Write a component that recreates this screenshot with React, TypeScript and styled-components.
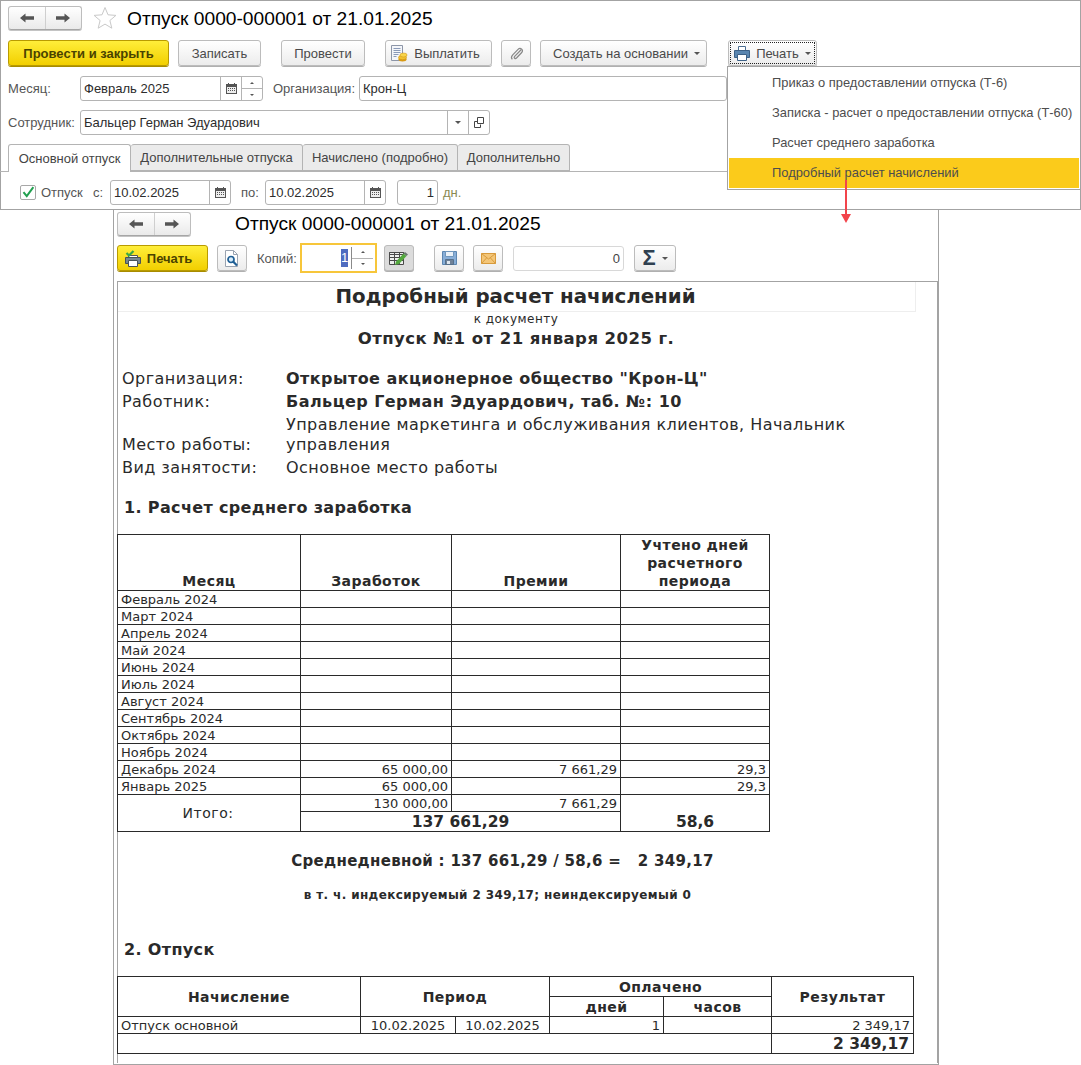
import React from 'react';
import styled, { createGlobalStyle } from 'styled-components';

const GlobalStyle = createGlobalStyle`
    html, body {
        margin: 0;
        padding: 0;
        background: #fff;
    }
    body {
        font-family: "Liberation Sans", Arial, sans-serif;
        font-size: 12px;
        color: #333;
    }
`;

const ArrowIcon = ({ right }: { right?: boolean }) => (
    <svg width="14" height="10" viewBox="0 0 14 10" style={right ? { transform: 'scaleX(-1)' } : undefined}>
        <path d="M5.500.5 0 5l5.500 4.500V6.700H14V3.300H5.500z" fill="#555" />
    </svg>
);

const StarIcon = () => (
    <svg width="24" height="24" viewBox="0 0 24 24">
        <path
            d="M12 1.500l3 7.300 7.900.6-6 5.100 1.900 7.700L12 18.100l-6.800 4.100 1.900-7.700-6-5.100 7.900-.6z"
            fill="#fff"
            stroke="#c9c9c9"
            strokeWidth="1"
        />
    </svg>
);

const CalendarIcon = () => (
    <svg width="11" height="11" viewBox="0 0 11 11">
        <path d="M0 1h11v10H0z" fill="#555" />
        <path d="M1 4h9v6H1z" fill="#eee" />
        <path d="M2 5h1v1H2zM4 5h1v1H4zM6 5h1v1H6zM8 5h1v1H8zM2 7h1v1H2zM4 7h1v1H4zM6 7h1v1H6zM8 7h1v1H8z" fill="#555" />
        <path d="M2 0h1v2H2zM8 0h1v2H8z" fill="#555" />
    </svg>
);

const PayIcon = () => (
    <svg width="17" height="17" viewBox="0 0 17 17">
        <path d="M.5.5h11v15H.5z" fill="#f4f6fa" stroke="#8d96a8" />
        <path d="M2.500 3.500h7M2.500 5.500h7M2.500 7.500h7M2.500 9.500h5M2.500 11.500h3" stroke="#8a9ab8" />
        <ellipse cx="11.500" cy="14.300" rx="4" ry="2.200" fill="#d99a14" />
        <ellipse cx="11.500" cy="12.500" rx="4" ry="2.200" fill="#f2c230" stroke="#c98c10" strokeWidth=".5" />
        <ellipse cx="12.500" cy="10" rx="3.600" ry="2" fill="#f8d44a" stroke="#c98c10" strokeWidth=".5" />
    </svg>
);

const ClipIcon = () => (
    <svg width="15" height="15" viewBox="0 0 18 18" fill="none">
        <path
            d="M14.500 4.500 6.800 12.400c-.9.900-.6 1.700-.1 2.200.6.500 1.400.7 2.300-.2l6-6.300c1.500-1.600 1.200-3.300.2-4.300-1.100-1-2.800-1.300-4.300.2L4.500 10.600c-2 2.200-1.600 4.300-.4 5.400"
            stroke="#888"
            strokeWidth="1.500"
        />
    </svg>
);

const OpenIcon = () => (
    <svg width="11" height="11" viewBox="0 0 11 11" fill="none">
        <path d="M3.500.5h6v6h-6z" stroke="#444" />
        <path d="M3.500 4.500H.5v6h6V7.500" stroke="#444" />
    </svg>
);

const PrinterIcon = () => (
    <svg width="16" height="15" viewBox="0 0 16 15">
        <path d="M4.500.5h7v5h-7z" fill="#fff" stroke="#4c6f92" />
        <path d="M.5 4.500h15v7H.5z" fill="#5a86b0" stroke="#3d6186" />
        <path d="M3.500 8.500h9v6h-9z" fill="#fff" stroke="#3d6186" />
    </svg>
);

const PrintCheckIcon = () => (
    <svg width="16" height="17" viewBox="0 0 16 17">
        <path d="M3.500 5.500h9v4h-9z" fill="#fff" stroke="#555" />
        <path d="M.5 7.500h15v6H.5z" fill="#76878f" stroke="#4a5358" />
        <path d="M3.500 10.500h9v6h-9z" fill="#fff" stroke="#4a5358" />
        <path d="M1.500 3l2.500 2.500L8.500 1" fill="none" stroke="#39a845" strokeWidth="2.200" />
    </svg>
);

const PreviewIcon = () => (
    <svg width="14" height="17" viewBox="0 0 14 17">
        <path d="M.5.5h8l4 4v12H.5z" fill="#fff" stroke="#9aa3b0" />
        <path d="M8.500.5v4h4" fill="none" stroke="#9aa3b0" />
        <circle cx="6" cy="9.500" r="3" fill="#d8ecfa" stroke="#1f5f95" strokeWidth="1.700" />
        <path d="M8.300 11.800 12 15.500" stroke="#1f5f95" strokeWidth="2.200" />
    </svg>
);

const TableEditIcon = () => (
    <svg width="20" height="15" viewBox="0 0 20 15">
        <path d="M.5 1.500h14v12H.5z" fill="#eef0ee" stroke="#4a4a4a" />
        <path d="M.5 1.500h14v2H.5zM.5 6.500h14M.5 9.500h14M5.500 1.500v12M10.500 1.500v12" fill="none" stroke="#4a4a4a" />
        <path d="M6 14l1-3.500 7.500-8 3 2.500-7.500 8z" fill="#53a83e" />
        <path d="M14.500 2.500 16 1l3 2.500L17.500 5z" fill="#6a7a70" />
    </svg>
);

const SaveIcon = () => (
    <svg width="15" height="14" viewBox="0 0 15 14">
        <path d="M.5.5h14v13H.5z" fill="#88aed8" stroke="#5c86b0" />
        <path d="M3.500.5h8v5h-8z" fill="#eaf1f8" stroke="#6f96bc" />
        <path d="M3.500 8.500h8v5h-8z" fill="#6f8298" stroke="#56708a" />
        <path d="M5 10h3v3H5z" fill="#dfe7ef" />
    </svg>
);

const MailIcon = () => (
    <svg width="15" height="11" viewBox="0 0 15 11">
        <path d="M.5.5h14v10H.5z" fill="#f4c678" stroke="#d79a3c" />
        <path d="M.5.5 7.500 6l7-5.500M.5 10.500l5-5.500M14.500 10.500l-5-5.500" fill="none" stroke="#d79a3c" />
    </svg>
);

const months: [string, string, string, string][] = [
    ['Февраль 2024', '', '', ''],
    ['Март 2024', '', '', ''],
    ['Апрель 2024', '', '', ''],
    ['Май 2024', '', '', ''],
    ['Июнь 2024', '', '', ''],
    ['Июль 2024', '', '', ''],
    ['Август 2024', '', '', ''],
    ['Сентябрь 2024', '', '', ''],
    ['Октябрь 2024', '', '', ''],
    ['Ноябрь 2024', '', '', ''],
    ['Декабрь 2024', '65 000,00', '7 661,29', '29,3'],
    ['Январь 2025', '65 000,00', '', '29,3'],
];

const menuItems = [
    'Приказ о предоставлении отпуска (Т-6)',
    'Записка - расчет о предоставлении отпуска (Т-60)',
    'Расчет среднего заработка',
    'Подробный расчет начислений',
];

export default function App(): React.ReactElement {
    return (
        <Page>
            <GlobalStyle />
            <DocWindow>
                <TitleRow>
                    <NavGroup>
                        <NavButton><ArrowIcon /></NavButton>
                        <NavButton><ArrowIcon right /></NavButton>
                    </NavGroup>
                    <StarSlot><StarIcon /></StarSlot>
                    <Title>Отпуск 0000-000001 от 21.01.2025</Title>
                </TitleRow>

                <CommandBar>
                    <Button $w={161} $primary>Провести и закрыть</Button>
                    <Button $w={83} $ml={9}>Записать</Button>
                    <Button $w={84} $ml={20}>Провести</Button>
                    <Button $w={107} $ml={20} $pr={6}><PayIcon />Выплатить</Button>
                    <Button $w={30} $ml={9}><ClipIcon /></Button>
                    <Button $w={167} $ml={9} $pl={6}>Создать на основании<Caret /></Button>
                    <Button $w={89} $ml={21} $focused><PrinterIcon />Печать<Caret /></Button>
                </CommandBar>

                <FormRow $mt={10}>
                    <FieldLabel $w={72}>Месяц:</FieldLabel>
                    <Field $w={183}>
                        <FieldText>Февраль 2025</FieldText>
                        <FieldAction><CalendarIcon /></FieldAction>
                        <Spinner><SpinUp /><SpinDown /></Spinner>
                    </Field>
                    <FieldLabel $w={86} $ml={10}>Организация:</FieldLabel>
                    <Field $w={368}><FieldText>Крон-Ц</FieldText></Field>
                </FormRow>

                <FormRow $mt={9}>
                    <FieldLabel $w={72}>Сотрудник:</FieldLabel>
                    <Field $w={410}>
                        <FieldText>Бальцер Герман Эдуардович</FieldText>
                        <FieldAction><Caret /></FieldAction>
                        <FieldAction><OpenIcon /></FieldAction>
                    </Field>
                </FormRow>

                <TabStrip>
                    <Tab $active $w={123}>Основной отпуск</Tab>
                    <Tab $w={172}>Дополнительные отпуска</Tab>
                    <Tab $w={155}>Начислено (подробно)</Tab>
                    <Tab $w={112}>Дополнительно</Tab>
                </TabStrip>

                <FormRow $mt={8}>
                    <CheckBox>
                        <svg width="17" height="15" viewBox="0 0 17 15" fill="none">
                            <path d="M3 7l4 5 8-11" stroke="#22a050" strokeWidth="2.400" />
                        </svg>
                    </CheckBox>
                    <FieldLabel $w={52} $ml={5}>Отпуск</FieldLabel>
                    <FieldLabel $w={17}>с:</FieldLabel>
                    <Field $w={121}>
                        <FieldText>10.02.2025</FieldText>
                        <FieldAction><CalendarIcon /></FieldAction>
                    </Field>
                    <FieldLabel $w={24} $ml={10}>по:</FieldLabel>
                    <Field $w={121}>
                        <FieldText>10.02.2025</FieldText>
                        <FieldAction><CalendarIcon /></FieldAction>
                    </Field>
                    <Field $w={41} $ml={11}><FieldText $right>1</FieldText></Field>
                    <FieldLabel $w={30} $ml={5} $muted>дн.</FieldLabel>
                </FormRow>

                <Menu>
                    {menuItems.map((item, i) => (
                        <MenuItem key={item} $active={i === 3}>{item}</MenuItem>
                    ))}
                </Menu>
            </DocWindow>

            <PointerArrow width="12" height="44" viewBox="0 0 12 44">
                <path d="M5 0h2v34h4l-5 9-5-9h4z" fill="#f2444b" />
            </PointerArrow>

            <PrintWindow>
                <PrintTitleRow>
                    <NavGroup>
                        <NavButton><ArrowIcon /></NavButton>
                        <NavButton><ArrowIcon right /></NavButton>
                    </NavGroup>
                    <PrintTitle>Отпуск 0000-000001 от 21.01.2025</PrintTitle>
                </PrintTitleRow>

                <PrintBar>
                    <Button $w={91} $primary $pr={8}><PrintCheckIcon />Печать</Button>
                    <Button $w={30} $ml={9}><PreviewIcon /></Button>
                    <FieldLabel $w={43} $ml={10}>Копий:</FieldLabel>
                    <CopiesField>
                        <Selected><SelectedDigit>1</SelectedDigit></Selected>
                        <CopiesSpinner><SpinUp /><SpinDown /></CopiesSpinner>
                    </CopiesField>
                    <Button $w={30} $ml={7} $pressed><TableEditIcon /></Button>
                    <Button $w={30} $ml={20}><SaveIcon /></Button>
                    <Button $w={30} $ml={9}><MailIcon /></Button>
                    <SumField>0</SumField>
                    <Button $w={42} $ml={10}><Sigma>Σ</Sigma><Caret /></Button>
                </PrintBar>

                <Sheet>
                    <SheetTitle>Подробный расчет начислений</SheetTitle>
                    <SheetCaption>к документу</SheetCaption>
                    <SheetSubtitle>Отпуск №1 от 21 января 2025 г.</SheetSubtitle>

                    <Info>
                        <InfoLabel>Организация:</InfoLabel>
                        <InfoValue $bold>Открытое акционерное общество "Крон-Ц"</InfoValue>
                        <InfoLabel>Работник:</InfoLabel>
                        <InfoValue $bold>Бальцер Герман Эдуардович, таб. №: 10</InfoValue>
                        <InfoLabel>Место работы:</InfoLabel>
                        <InfoValue>Управление маркетинга и обслуживания клиентов, Начальник управления</InfoValue>
                        <InfoLabel>Вид занятости:</InfoLabel>
                        <InfoValue>Основное место работы</InfoValue>
                    </Info>

                    <SectionTitle $mt={18}>1. Расчет среднего заработка</SectionTitle>

                    <EarningsTable>
                        <colgroup>
                            <col width="183" />
                            <col width="151" />
                            <col width="169" />
                            <col width="149" />
                        </colgroup>
                        <tbody>
                            <tr>
                                <HeadCell $h={56} $bottom>Месяц</HeadCell>
                                <HeadCell $h={56} $bottom>Заработок</HeadCell>
                                <HeadCell $h={56} $bottom>Премии</HeadCell>
                                <HeadCell $h={56} $bottom>Учтено дней<br />расчетного<br />периода</HeadCell>
                            </tr>
                            {months.map(row => (
                                <tr key={row[0]}>
                                    <Cell>{row[0]}</Cell>
                                    <Cell $right>{row[1]}</Cell>
                                    <Cell $right>{row[2]}</Cell>
                                    <Cell $right>{row[3]}</Cell>
                                </tr>
                            ))}
                            <tr>
                                <TotalLabel rowSpan={2}>Итого:</TotalLabel>
                                <Cell $right>130 000,00</Cell>
                                <Cell $right>7 661,29</Cell>
                                <TotalCell rowSpan={2} $bottom>58,6</TotalCell>
                            </tr>
                            <tr>
                                <TotalCell colSpan={2}>137 661,29</TotalCell>
                            </tr>
                        </tbody>
                    </EarningsTable>

                    <Average>Среднедневной : 137 661,29 / 58,6 = &nbsp; 2 349,17</Average>
                    <AverageNote>в т. ч. индексируемый 2 349,17; неиндексируемый 0</AverageNote>

                    <SectionTitle $mt={35}>2. Отпуск</SectionTitle>

                    <AccrualTable>
                        <colgroup>
                            <col width="243" />
                            <col width="95" />
                            <col width="94" />
                            <col width="114" />
                            <col width="108" />
                            <col width="142" />
                        </colgroup>
                        <tbody>
                            <tr>
                                <HeadCell $h={20} rowSpan={2}>Начисление</HeadCell>
                                <HeadCell $h={20} rowSpan={2} colSpan={2}>Период</HeadCell>
                                <HeadCell $h={20} colSpan={2}>Оплачено</HeadCell>
                                <HeadCell $h={20} rowSpan={2}>Результат</HeadCell>
                            </tr>
                            <tr>
                                <HeadCell $h={20}>дней</HeadCell>
                                <HeadCell $h={20}>часов</HeadCell>
                            </tr>
                            <tr>
                                <Cell>Отпуск основной</Cell>
                                <Cell $center>10.02.2025</Cell>
                                <Cell $center>10.02.2025</Cell>
                                <Cell $right>1</Cell>
                                <Cell />
                                <Cell $right>2 349,17</Cell>
                            </tr>
                            <tr>
                                <Cell colSpan={5} />
                                <TotalCell $h={20} $alignRight>2 349,17</TotalCell>
                            </tr>
                        </tbody>
                    </AccrualTable>
                </Sheet>
            </PrintWindow>
        </Page>
    );
}

const Page = styled.div`
    position: relative;
    width: 1081px;
    height: 1065px;
    overflow: hidden;
    background: #fff;
`;

const DocWindow = styled.section`
    position: relative;
    box-sizing: border-box;
    height: 210px;
    padding: 6px 8px 0;
    border: 1px solid #a3a3a3;
    background: #fff;
`;

const TitleRow = styled.div`
    display: flex;
    align-items: center;
    height: 24px;
    margin-top: -1px;
    margin-left: -1px;
`;

const NavGroup = styled.div`
    display: flex;
    width: 74px;
    height: 24px;
    box-sizing: border-box;
    border: 1px solid #bdbdbd;
    border-bottom-color: #a6a6a6;
    border-radius: 3px;
    background: linear-gradient(#fff, #eaeaea);
    box-shadow: 0 1px 0 #c4c4c4;
`;

const NavButton = styled.div`
    flex: 1;
    display: flex;
    align-items: center;
    justify-content: center;

    & + & {
        border-left: 1px solid #cfcfcf;
    }
`;

const StarSlot = styled.div`
    display: flex;
    margin-left: 11px;
`;

const Title = styled.h1`
    margin: 1px 0 0 10px;
    font-size: 19.2px;
    font-weight: 400;
    color: #000;
    white-space: nowrap;
`;

const CommandBar = styled.div`
    display: flex;
    height: 26px;
    margin-top: 10px;
    margin-left: -1px;
`;

const Button = styled.div<{
    $w: number;
    $ml?: number;
    $pl?: number;
    $pr?: number;
    $primary?: boolean;
    $focused?: boolean;
    $pressed?: boolean;
}>`
    position: relative;
    flex: none;
    display: flex;
    align-items: center;
    justify-content: center;
    gap: 6px;
    box-sizing: border-box;
    width: ${props => props.$w}px;
    height: 26px;
    margin-left: ${props => props.$ml ?? 0}px;
    padding: 0 ${props => props.$pr ?? 0}px 0 ${props => props.$pl ?? 0}px;
    border: 1px solid ${props => (props.$primary ? '#b99b00' : '#bcbcbc')};
    border-radius: 3px;
    background: ${props =>
        props.$primary
            ? 'linear-gradient(#ffee3a, #f2cf00)'
            : props.$pressed
              ? '#dcdcdc'
              : 'linear-gradient(#fff, #ececec)'};
    box-shadow: 0 1px 0 ${props => (props.$primary ? '#a88c00' : '#b0b0b0')};
    color: ${props => (props.$primary ? '#4a4300' : '#4a4a4a')};
    font-size: 13px;
    font-weight: ${props => (props.$primary ? 700 : 400)};
    white-space: nowrap;
    ${props => props.$focused && 'outline: 1px dotted #222; outline-offset: -3px;'}
`;

const Caret = styled.span`
    display: inline-block;
    width: 0;
    height: 0;
    border-left: 3px solid transparent;
    border-right: 3px solid transparent;
    border-top: 3px solid #555;
`;

const FormRow = styled.div<{ $mt: number }>`
    display: flex;
    align-items: center;
    height: 25px;
    margin-top: ${props => props.$mt}px;
    margin-left: -1px;
`;

const FieldLabel = styled.span<{ $w: number; $ml?: number; $muted?: boolean }>`
    flex: none;
    width: ${props => props.$w}px;
    margin-left: ${props => props.$ml ?? 0}px;
    font-size: 13px;
    color: ${props => (props.$muted ? '#8a8a50' : '#555')};
    white-space: nowrap;
`;

const Field = styled.div<{ $w: number; $ml?: number }>`
    flex: none;
    display: flex;
    box-sizing: border-box;
    width: ${props => props.$w}px;
    height: 25px;
    margin-left: ${props => props.$ml ?? 0}px;
    border: 1px solid #b4b4b4;
    border-radius: 3px;
    background: #fff;
`;

const FieldText = styled.div<{ $right?: boolean }>`
    flex: 1;
    align-self: center;
    padding: 0 3px;
    font-size: 13px;
    color: #2c2c2c;
    text-align: ${props => (props.$right ? 'right' : 'left')};
    white-space: nowrap;
`;

const FieldAction = styled.div`
    flex: none;
    display: flex;
    align-items: center;
    justify-content: center;
    width: 20px;
    border-left: 1px solid #b4b4b4;
`;

const Spinner = styled.div`
    flex: none;
    display: flex;
    flex-direction: column;
    width: 20px;
    border-left: 1px solid #b4b4b4;
`;

const SpinUp = styled.div`
    flex: 1;
    display: flex;
    align-items: center;
    justify-content: center;
    border-bottom: 1px solid #b4b4b4;

    &::before {
        content: '';
        border-left: 2px solid transparent;
        border-right: 2px solid transparent;
        border-bottom: 2px solid #555;
    }
`;

const SpinDown = styled.div`
    flex: 1;
    display: flex;
    align-items: center;
    justify-content: center;

    &::before {
        content: '';
        border-left: 2px solid transparent;
        border-right: 2px solid transparent;
        border-top: 2px solid #555;
    }
`;

const TabStrip = styled.div`
    display: flex;
    height: 28px;
    margin: 9px -8px 0 -9px;
    padding-left: 8px;
    box-sizing: border-box;
    border-bottom: 1px solid #b4b4b4;
`;

const Tab = styled.div<{ $w: number; $active?: boolean }>`
    flex: none;
    display: flex;
    align-items: center;
    justify-content: center;
    box-sizing: border-box;
    width: ${props => props.$w}px;
    height: ${props => (props.$active ? 28 : 27)}px;
    border: 1px solid #b4b4b4;
    border-left-width: ${props => (props.$active ? 1 : 0)}px;
    border-bottom-width: ${props => (props.$active ? 0 : 1)}px;
    border-radius: 3px 3px 0 0;
    background: ${props => (props.$active ? '#fff' : '#ebebeb')};
    font-size: 13px;
    color: #444;
    white-space: nowrap;
`;

const CheckBox = styled.div`
    flex: none;
    display: flex;
    align-items: center;
    justify-content: center;
    box-sizing: border-box;
    width: 16px;
    height: 15px;
    margin-left: 12px;
    border: 1px solid #a8a8a8;
    border-radius: 2px;
`;

const Menu = styled.ul`
    position: absolute;
    top: 65px;
    right: -1px;
    width: 354px;
    height: 124px;
    box-sizing: border-box;
    margin: 0;
    padding: 1px;
    border: 1px solid #a3a3a3;
    background: #fff;
    list-style: none;
`;

const MenuItem = styled.li<{ $active?: boolean }>`
    height: 30px;
    line-height: 30px;
    padding-left: 43px;
    font-size: 12.9px;
    color: #4d4d4d;
    background: ${props => (props.$active ? '#fbcb1b' : 'transparent')};
    white-space: nowrap;
`;

const PointerArrow = styled.svg`
    position: absolute;
    left: 840px;
    top: 180px;
    z-index: 5;
`;

const PrintWindow = styled.section`
    box-sizing: border-box;
    width: 826px;
    height: 856px;
    margin: -1px 0 0 113px;
    padding: 2px 0 0 3px;
    border: 1px solid #a3a3a3;
    border-top: 0;
`;

const PrintTitleRow = styled.div`
    display: flex;
    align-items: center;
    height: 24px;
    margin-top: 1px;
`;

const PrintTitle = styled.h2`
    margin: 0 0 0 44px;
    font-size: 19.2px;
    font-weight: 400;
    color: #000;
    white-space: nowrap;
`;

const PrintBar = styled.div`
    display: flex;
    align-items: center;
    height: 30px;
    margin-top: 7px;
`;

const CopiesField = styled.div`
    flex: none;
    display: flex;
    box-sizing: border-box;
    width: 77px;
    height: 30px;
    border: 2px solid #f7c63a;
    background: #fff;
    padding: 2px 2px 2px 0;
`;

const Selected = styled.span`
    flex: 1;
    align-self: center;
    text-align: right;
    padding-right: 3px;
    font-size: 13px;
    color: #fff;
`;

const SelectedDigit = styled.span`
    display: inline-block;
    width: 7px;
    text-align: center;
    background: #4f6cc0;
    line-height: 18px;
`;

const CopiesSpinner = styled(Spinner)`
    width: 21px;
    border-left-color: #8a8a8a;
`;

const SumField = styled.div`
    flex: none;
    box-sizing: border-box;
    width: 111px;
    height: 25px;
    margin-left: 10px;
    padding-right: 3px;
    border: 1px solid #d8d8d8;
    border-radius: 3px;
    line-height: 23px;
    text-align: right;
    font-size: 13px;
    color: #444;
`;

const Sigma = styled.span`
    font-size: 22px;
    line-height: 1;
    font-weight: 700;
    color: #2f4050;
`;

const Sheet = styled.div`
    box-sizing: border-box;
    width: 821px;
    height: 782px;
    margin-top: 8px;
    border-top: 1px solid #a3a3a3;
    border-left: 1px solid #a3a3a3;
    border-right: 1px solid #a3a3a3;
    font-family: "DejaVu Sans", Verdana, sans-serif;
    color: #2a2a2a;
`;

const SheetTitle = styled.div`
    box-sizing: border-box;
    width: 798px;
    height: 30px;
    padding-right: 2px;
    line-height: 30px;
    border-right: 1px solid #eee;
    border-bottom: 1px solid #eee;
    text-align: center;
    font-size: 19.8px;
    font-weight: 700;
`;

const SheetCaption = styled.div`
    width: 796px;
    height: 14px;
    line-height: 14px;
    text-align: center;
    font-size: 12px;
    letter-spacing: 0.45px;
`;

const SheetSubtitle = styled.div`
    width: 796px;
    height: 25px;
    line-height: 25px;
    text-align: center;
    font-size: 16.5px;
    letter-spacing: 0.45px;
    font-weight: 700;
`;

const Info = styled.div`
    display: grid;
    grid-template-columns: 164px 590px;
    grid-auto-rows: auto;
    row-gap: 3px;
    margin: 18px 0 0 4px;
    font-size: 16px;
    letter-spacing: 0.45px;
    line-height: 20px;
`;

const InfoLabel = styled.div`
    align-self: end;
    white-space: nowrap;
`;

const InfoValue = styled.div<{ $bold?: boolean }>`
    font-weight: ${props => (props.$bold ? 700 : 400)};
`;

const SectionTitle = styled.div<{ $mt: number }>`
    margin: ${props => props.$mt}px 0 0 6px;
    height: 24px;
    line-height: 24px;
    font-size: 16px;
    letter-spacing: 0.35px;
    font-weight: 700;
`;

const EarningsTable = styled.table`
    width: 652px;
    margin: 14px 0 0 -1px;
    border-collapse: collapse;
    table-layout: fixed;
    font-size: 13px;
`;

const AccrualTable = styled(EarningsTable)`
    width: 796px;
`;

const HeadCell = styled.td<{ $h: number; $bottom?: boolean }>`
    height: ${props => props.$h}px;
    padding: 0 2px;
    border: 1px solid #2a2a2a;
    box-sizing: border-box;
    text-align: center;
    vertical-align: ${props => (props.$bottom ? 'bottom' : 'middle')};
    font-size: 14px;
    letter-spacing: 0.45px;
    font-weight: 700;
    line-height: 18px;
`;

const Cell = styled.td<{ $right?: boolean; $center?: boolean }>`
    height: 17px;
    padding: 0 3px;
    border: 1px solid #2a2a2a;
    box-sizing: border-box;
    line-height: 15px;
    white-space: nowrap;
    text-align: ${props => (props.$right ? 'right' : props.$center ? 'center' : 'left')};
`;

const TotalLabel = styled(Cell)`
    padding: 1px 4px 0 2px;
    text-align: center;
    font-size: 14px;
    letter-spacing: 0.5px;
`;

const TotalCell = styled.td<{ $bottom?: boolean; $h?: number; $alignRight?: boolean }>`
    height: ${props => props.$h ?? 20}px;
    padding: 0 4px;
    border: 1px solid #2a2a2a;
    box-sizing: border-box;
    text-align: ${props => (props.$alignRight ? 'right' : 'center')};
    vertical-align: ${props => (props.$bottom ? 'bottom' : 'middle')};
    font-size: 15.5px;
    font-weight: 700;
    line-height: 18px;
    white-space: nowrap;
`;

const Average = styled.div`
    width: 769px;
    margin-top: 19px;
    text-align: center;
    font-size: 15px;
    letter-spacing: 0.3px;
    font-weight: 700;
    line-height: 20px;
`;

const AverageNote = styled.div`
    width: 759px;
    margin-top: 16px;
    text-align: center;
    font-size: 12px;
    letter-spacing: 0.38px;
    font-weight: 700;
    line-height: 16px;
`;
